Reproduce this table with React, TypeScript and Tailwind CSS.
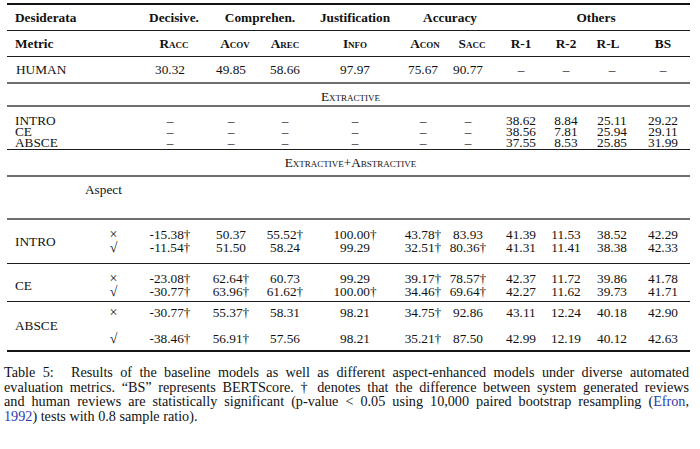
const COLS = "grid grid-cols-[53px_60px_62px_46px_94px_42px_48px_58px_32px_60px_42px]";

const extractive = [
  ["INTRO", "38.62", "8.84", "25.11", "29.22"],
  ["CE", "38.56", "7.81", "25.94", "29.11"],
  ["ABSCE", "37.55", "8.53", "25.85", "31.99"],
];

const blocks = [
  {
    name: "INTRO",
    pad: "pt-[8px] pb-[9px]",
    gap: "",
    rows: [
      ["×", "-15.38†", "50.37", "55.52†", "100.00†", "43.78†", "83.93", "41.39", "11.53", "38.52", "42.29"],
      ["√", "-11.54†", "51.50", "58.24", "99.29", "32.51†", "80.36†", "41.31", "11.41", "38.38", "42.33"],
    ],
  },
  {
    name: "CE",
    pad: "pt-[8px] pb-[3px]",
    gap: "",
    rows: [
      ["×", "-23.08†", "62.64†", "60.73", "99.29", "39.17†", "78.57†", "42.37", "11.72", "39.86", "41.78"],
      ["√", "-30.77†", "63.96†", "61.62†", "100.00†", "34.46†", "69.64†", "42.27", "11.62", "39.73", "41.71"],
    ],
  },
  {
    name: "ABSCE",
    pad: "pt-[4px] pb-[5px]",
    gap: "gap-y-[13px]",
    rows: [
      ["×", "-30.77†", "55.37†", "58.31", "98.21", "34.75†", "92.86", "43.11", "12.24", "40.18", "42.90"],
      ["√", "-38.46†", "56.91†", "57.56", "98.21", "35.21†", "87.50", "42.99", "12.19", "40.12", "42.63"],
    ],
  },
];

function Rule({ kind = "thin" }: { kind?: "thin" | "gray" | "heavy" }) {
  if (kind === "heavy") return <div className="h-[2px] bg-[#141414]" />;
  if (kind === "gray") return <div className="h-[2px] bg-[#6e6e6e]" />;
  return <div className="h-px bg-[#1c1c1c]" />;
}

function Cell({ children, className = "" }: { children?: React.ReactNode; className?: string }) {
  return <div className={`flex justify-center whitespace-nowrap ${className}`}>{children}</div>;
}

function ValueRow({ values, h }: { values: string[]; h: string }) {
  return (
    <div className={`${COLS} ${h} items-center`}>
      {values.map((v, i) => (
        <Cell key={i} className={v === "×" || v === "√" ? "text-[14px]" : ""}>
          {v}
        </Cell>
      ))}
    </div>
  );
}

const sc = "[font-variant-caps:small-caps]";

export default function App() {
  return (
    <div className="w-[700px] h-[449px] bg-white text-[#111] overflow-hidden font-['Liberation_Serif','Times_New_Roman',serif]">
      <div className="ml-[7px] w-[683px] pt-[3px] text-[13.3px] leading-none">
        <Rule kind="heavy" />

        {/* group header */}
        <div className="flex h-[25px] items-center font-bold">
          <div className="w-[80px] pl-[8px]">Desiderata</div>
          <div className="w-[53px]" />
          <Cell className="w-[60px] pl-[8px]">Decisive.</Cell>
          <Cell className="w-[108px] pl-[12px]">Comprehen.</Cell>
          <Cell className="w-[94px]">Justification</Cell>
          <Cell className="w-[90px] pl-[6px]">Accuracy</Cell>
          <Cell className="w-[192px] pl-[16px]">Others</Cell>
        </div>
        <Rule />

        {/* metric header */}
        <div className="flex h-[25px] items-center font-bold">
          <div className="w-[80px] pl-[8px]">Metric</div>
          <div className={`${COLS} items-center`}>
            <div />
            <Cell className={`${sc} pl-[8px]`}>Racc</Cell>
            <Cell className={`${sc} pl-[8px]`}>Acov</Cell>
            <Cell className={sc}>Arec</Cell>
            <Cell className={sc}>Info</Cell>
            <Cell className={`${sc} pl-[4px]`}>Acon</Cell>
            <Cell className={`${sc} pl-[8px]`}>Sacc</Cell>
            <Cell>R-1</Cell>
            <Cell>R-2</Cell>
            <Cell className="pr-[8px]">R-L</Cell>
            <Cell>BS</Cell>
          </div>
        </div>
        <Rule />

        {/* human */}
        <div className="flex h-[25px] items-center">
          <div className="w-[80px] pl-[9px]">HUMAN</div>
          <ValueRow h="h-[25px]" values={["", "30.32", "49.85", "58.66", "97.97", "75.67", "90.77", "–", "–", "–", "–"]} />
        </div>
        <Rule kind="gray" />

        <div className={`flex h-[21px] pt-[5px] items-center justify-center ${sc}`}>
          <span className="pl-[4px]">Extractive</span>
        </div>
        <Rule kind="gray" />

        {/* extractive */}
        <div className="pt-[8px] pb-[1px] leading-[11px]">
          {extractive.map(([name, ...rest]) => (
            <div key={name} className="flex h-[11px] items-center">
              <div className="w-[80px] pl-[8px]">{name}</div>
              <ValueRow h="h-[11px]" values={["", "–", "–", "–", "–", "–", "–", ...rest]} />
            </div>
          ))}
        </div>
        <Rule />

        <div className={`flex h-[25px] items-center justify-center ${sc}`}>
          <span className="pl-[4px]">Extractive+Abstractive</span>
        </div>
        <Rule kind="gray" />

        <div className="flex h-[41px] items-start">
          <div className="w-[78px]" />
          <div className="h-[25px] flex items-center pt-[1px]">Aspect</div>
        </div>
        <Rule kind="gray" />

        {blocks.map((b, bi) => (
          <div key={b.name}>
            <div className={`flex ${b.pad} leading-[13px]`}>
              <div className="w-[80px] pl-[8px] flex items-center">{b.name}</div>
              <div className={`flex flex-col ${b.gap}`}>
                {b.rows.map((r, i) => (
                  <ValueRow key={i} h="h-[13px]" values={r} />
                ))}
              </div>
            </div>
            <Rule kind={bi === blocks.length - 1 ? "heavy" : "thin"} />
          </div>
        ))}
      </div>

      {/* caption */}
      <div className="ml-[4px] mt-[13px] w-[685px] text-[14.2px] leading-[14.5px]">
        <div className="whitespace-nowrap text-justify [text-align-last:justify]">
          <span className="mr-[10px]">Table 5:</span> Results of the baseline models as well as different aspect-enhanced models under diverse automated
        </div>
        <div className="whitespace-nowrap text-justify [text-align-last:justify]">
          evaluation metrics. “BS” represents BERTScore. † denotes that the difference between system generated reviews
        </div>
        <div className="whitespace-nowrap text-justify [text-align-last:justify]">
          and human reviews are statistically significant (p-value &lt; 0.05 using 10,000 paired bootstrap resampling (
          <span className="text-[#2b3bb0]">Efron</span>,
        </div>
        <div className="whitespace-nowrap">
          <span className="text-[#2b3bb0]">1992</span>) tests with 0.8 sample ratio).
        </div>
      </div>
    </div>
  );
}
